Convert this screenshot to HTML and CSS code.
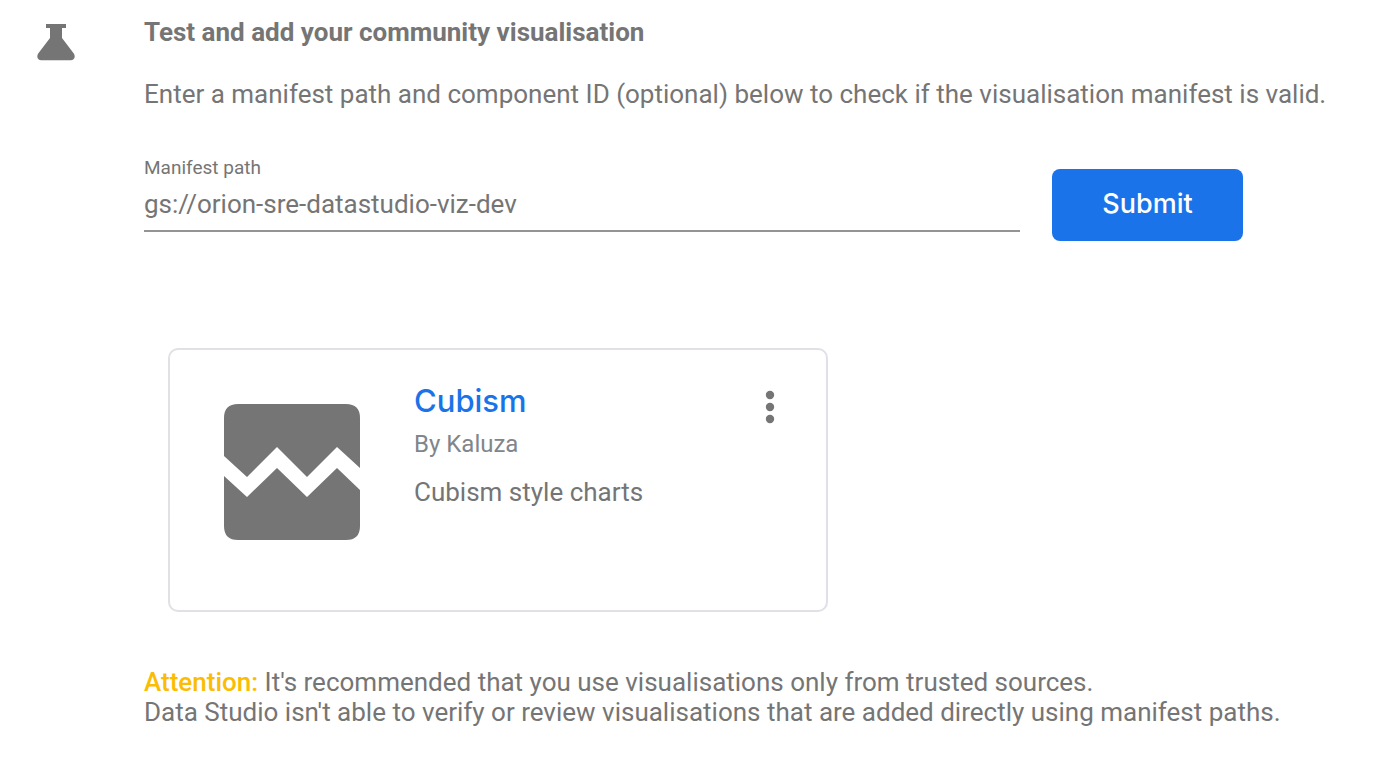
FILE: index.html
```html
<!DOCTYPE html>
<html lang="en-GB">
<head>
<meta charset="utf-8">
<meta name="viewport" content="width=device-width, initial-scale=1">
<title>Community visualisation</title>
<link rel="stylesheet" href="styles.css">
</head>
<body>
<main class="panel">
  <svg class="flask" viewBox="0 0 38 38" aria-hidden="true"><path d="M9 1h20v4h-4v10L36.800 30.500C39 34 37 37.300 33.500 37.300H4.500C1 37.300-1 34 1.200 30.500L13 15V5H9z"/></svg>
  <div class="content">
    <h1 class="title">Test and add your community visualisation</h1>
    <p class="intro">Enter a manifest path and component ID (optional) below to check if the visualisation manifest is valid.</p>
    <form class="form">
      <div class="field">
        <label class="label" for="path">Manifest path</label>
        <input class="input" id="path" type="text" value="gs://orion-sre-datastudio-viz-dev">
      </div>
      <button class="submit" type="button">Submit</button>
    </form>
    <article class="card">
      <svg class="thumb" viewBox="0 0 136 136" aria-hidden="true"><path d="M14 0H122Q136 0 136 14V64L113 43L83 73L53 43L23 73L0 52V14Q0 0 14 0zM0 72L23 93L53 64L83 93L113 64L136 86V122Q136 136 122 136H14Q0 136 0 122z"/></svg>
      <div class="details">
        <h2 class="name"><a href="#">Cubism</a></h2>
        <p class="author">By Kaluza</p>
        <p class="summary">Cubism style charts</p>
      </div>
      <button class="menu" type="button" aria-label="More options"><svg viewBox="0 0 10 34" aria-hidden="true"><circle cx="5" cy="5" r="4.200"/><circle cx="5" cy="17" r="4.200"/><circle cx="5" cy="29" r="4.200"/></svg></button>
    </article>
    <p class="notice"><strong>Attention:</strong> It's recommended that you use visualisations only from trusted sources.<br>Data Studio isn't able to verify or review visualisations that are added directly using manifest paths.</p>
  </div>
</main>
</body>
</html>
```
FILE: styles.css
```css
* { box-sizing: border-box; }
body { margin: 0; background: #fff; color: #757575; font: 26px/30px Roboto, sans-serif; }
h1, h2, p { margin: 0; }
button { border: 0; padding: 0; cursor: pointer; }
.panel { display: flex; align-items: flex-start; gap: 69px; padding: 17px 40px 32px 37px; }
.flask { flex: none; width: 38px; height: 38px; margin-top: 6px; fill: #757575; }
.content { flex: 1; min-width: 0; }
.title { font-size: 26px; line-height: 30px; font-weight: 700; }
.intro { margin-top: 32px; }
.form { display: flex; align-items: flex-start; gap: 32px; margin-top: 48px; padding-right: 99px; }
.field { flex: 1; min-width: 0; }
.label { display: block; font-size: 19px; line-height: 22px; }
.input { display: block; width: 100%; height: 53px; padding: 0 0 2px; border: 0; border-bottom: 2px solid #949494; outline: 0; background: none; color: #757575; font: inherit; }
.submit { flex: none; width: 191px; height: 72px; margin-top: 12px; padding-bottom: 2px; border-radius: 8px; background: #1a73e8; color: #fff; font: 500 27px/32px Inter, sans-serif; }
.card { display: flex; align-items: flex-start; width: 100%; max-width: 660px; min-height: 264px; margin: 107px 24px 0; padding: 32px 51px 32px 54px; border: 2px solid #e0e0e6; border-radius: 10px; }
.thumb { flex: none; width: 136px; height: 136px; margin-top: 22px; fill: #757575; }
.details { flex: 1; margin-left: 54px; }
.name { font: 500 31px/38px Inter, sans-serif; }
.name a { color: #1a73e8; text-decoration: none; }
.author { margin-top: 9px; font-size: 24px; line-height: 30px; color: #80868b; }
.summary { margin-top: 18px; }
.menu { width: 10px; height: 34px; margin-top: 8px; background: none; }
.menu svg { display: block; width: 10px; height: 34px; fill: #757575; }
.notice { margin-top: 55px; }
.notice strong { color: #fbbc04; font-weight: 500; }
```
